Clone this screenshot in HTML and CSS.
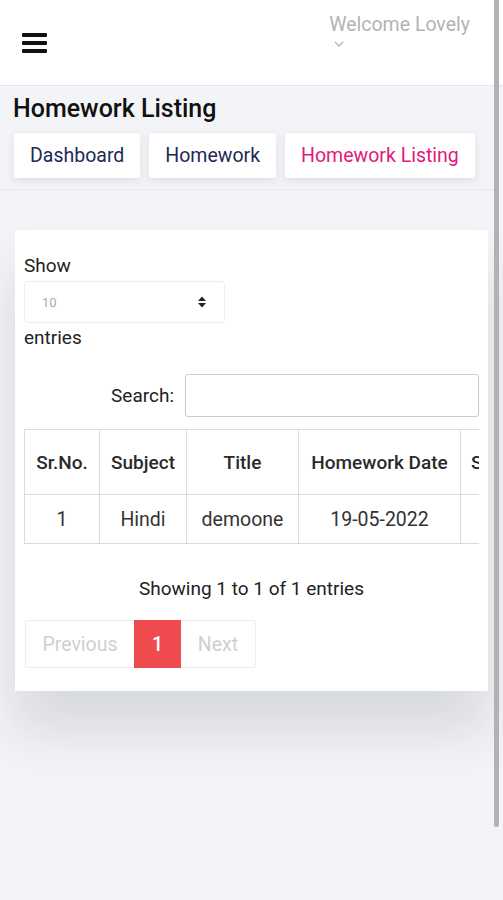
FILE: index.html
```html
<!DOCTYPE html>
<html>
<head>
<meta charset="utf-8">
<link rel="stylesheet" href="styles.css">
</head>
<body>
<div class="page">
  <header class="topbar">
    <div class="burger"><span></span><span></span><span></span></div>
    <div class="welcome">
      <div class="welcome-text">Welcome Lovely</div>
      <svg class="chev" width="10" height="6" viewBox="0 0 10 6"><path d="M1 1l4 4 4-4" fill="none" stroke="#b5b5b5" stroke-width="1.3"/></svg>
    </div>
  </header>
  <section class="crumbs">
    <h1 class="title">Homework Listing</h1>
    <nav class="crumb-row">
      <a class="crumb">Dashboard</a>
      <a class="crumb">Homework</a>
      <a class="crumb active">Homework Listing</a>
    </nav>
  </section>
  <main class="content">
    <div class="card">
      <div class="length">
        <div class="lbl">Show</div>
        <div class="select"><span>10</span>
          <svg width="10" height="14" viewBox="0 0 10 14"><path d="M1 6L5 1.5 9 6z M1 8L5 12.5 9 8z" fill="#222"/></svg>
        </div>
        <div class="lbl">entries</div>
      </div>
      <div class="search"><label>Search:</label><div class="input"></div></div>
      <div class="table-wrap">
        <table class="tbl">
          <thead>
            <tr><th class="c1">Sr.No.</th><th class="c2">Subject</th><th class="c3">Title</th><th class="c4">Homework Date</th><th class="c5">Submission</th></tr>
          </thead>
          <tbody>
            <tr><td>1</td><td>Hindi</td><td>demoone</td><td>19-05-2022</td><td></td></tr>
          </tbody>
        </table>
      </div>
      <div class="info">Showing 1 to 1 of 1 entries</div>
      <div class="pager">
        <span class="pg prev">Previous</span><span class="pg cur">1</span><span class="pg next">Next</span>
      </div>
    </div>
  </main>
  <div class="scrollbar"></div>
</div>
</body>
</html>
```
FILE: styles.css
```css
* { box-sizing: border-box; }
html, body { margin: 0; padding: 0; }
body {
  font-family: Roboto, "Liberation Sans", sans-serif;
  background: #f3f4f7;
  width: 503px;
  height: 900px;
  overflow: hidden;
}
.page { position: relative; min-height: 900px; }
.topbar {
  height: 86px;
  background: #fff;
  border-bottom: 1px solid #e3e5ea;
  display: flex;
  justify-content: space-between;
  align-items: flex-start;
  padding: 0 33px 0 22px;
}
.burger {
  margin-top: 33px;
  width: 25px;
  display: flex;
  flex-direction: column;
  gap: 4px;
}
.burger span { display: block; height: 4px; background: #111; border-radius: 1px; }
.welcome { margin-top: 13px; }
.welcome-text { color: #b3b3b3; font-size: 19.5px; line-height: 24px; }
.chev { display: block; margin: 4px 0 0 5px; }
.crumbs {
  padding: 8px 14px 11px 13px;
  border-bottom: 1px solid #e6e8ec;
  margin-right: 8px;
}
.title {
  margin: 0 0 10px 0;
  font-size: 25px;
  font-weight: 500;
  line-height: 29px;
  color: #111;
}
.crumb-row { display: flex; gap: 9px; margin-left: 1px; }
.crumb {
  height: 45px;
  display: flex;
  align-items: center;
  padding: 0 16px;
  background: #fff;
  border-radius: 3px;
  box-shadow: 0 3px 8px rgba(40, 45, 70, 0.10);
  font-size: 19.5px;
  color: #1d2a55;
}
.crumb.active { color: #e3187b; }
.content { padding: 40px 15px 0 15px; }
.card {
  background: #fff;
  padding: 24px 9px 23px 9px;
  box-shadow: 0 40px 50px rgba(30, 35, 70, 0.13);
}
.lbl { font-size: 19px; line-height: 23px; color: #222; }
.select {
  margin: 4px 0 3px 0;
  width: 201px;
  height: 42px;
  border: 1px solid #eceef1;
  border-radius: 3px;
  display: flex;
  align-items: center;
  justify-content: space-between;
  padding: 0 17px 0 17px;
  font-size: 13px;
  color: #aaa;
}
.search {
  margin-top: 25px;
  display: flex;
  justify-content: flex-end;
  align-items: center;
  gap: 11px;
}
.search label { font-size: 19px; color: #222; }
.input {
  width: 294px;
  height: 43px;
  border: 1px solid #c9cbd0;
  border-radius: 3px;
}
.table-wrap { margin-top: 12px; overflow: hidden; width: 455px; }
.tbl { border-collapse: collapse; table-layout: fixed; width: 600px; }
.tbl th, .tbl td {
  border: 1px solid #dcdcdc;
  text-align: center;
  white-space: nowrap;
  overflow: hidden;
  color: #333;
}
.tbl th { height: 65px; font-size: 19px; font-weight: 500; color: #2a2a2a; }
.tbl td { height: 49px; font-size: 19.5px; }
.tbl th.c5 { text-align: left; padding-left: 10px; }
.c1 { width: 75px; }
.c2 { width: 87px; }
.c3 { width: 112px; }
.c4 { width: 162px; }
.c5 { width: 164px; }
.info {
  text-align: center;
  font-size: 19px;
  color: #222;
  margin-top: 34px;
  line-height: 22px;
}
.pager { display: flex; margin-top: 20px; margin-left: 1px; }
.pg {
  height: 48px;
  display: flex;
  align-items: center;
  justify-content: center;
  font-size: 19.5px;
  color: #cfcfcf;
  border: 1px solid #eceef1;
}
.prev { width: 109px; border-radius: 3px 0 0 3px; border-right: none; }
.cur { width: 47px; background: #ef4b4f; color: #fff; border-color: #ef4b4f; font-weight: 500; }
.next { width: 75px; border-radius: 0 3px 3px 0; border-left: none; }
.scrollbar {
  position: absolute;
  top: 0;
  left: 494px;
  width: 5px;
  height: 827px;
  background: #b2b2b2;
  border-radius: 0 0 2px 2px;
}
```
